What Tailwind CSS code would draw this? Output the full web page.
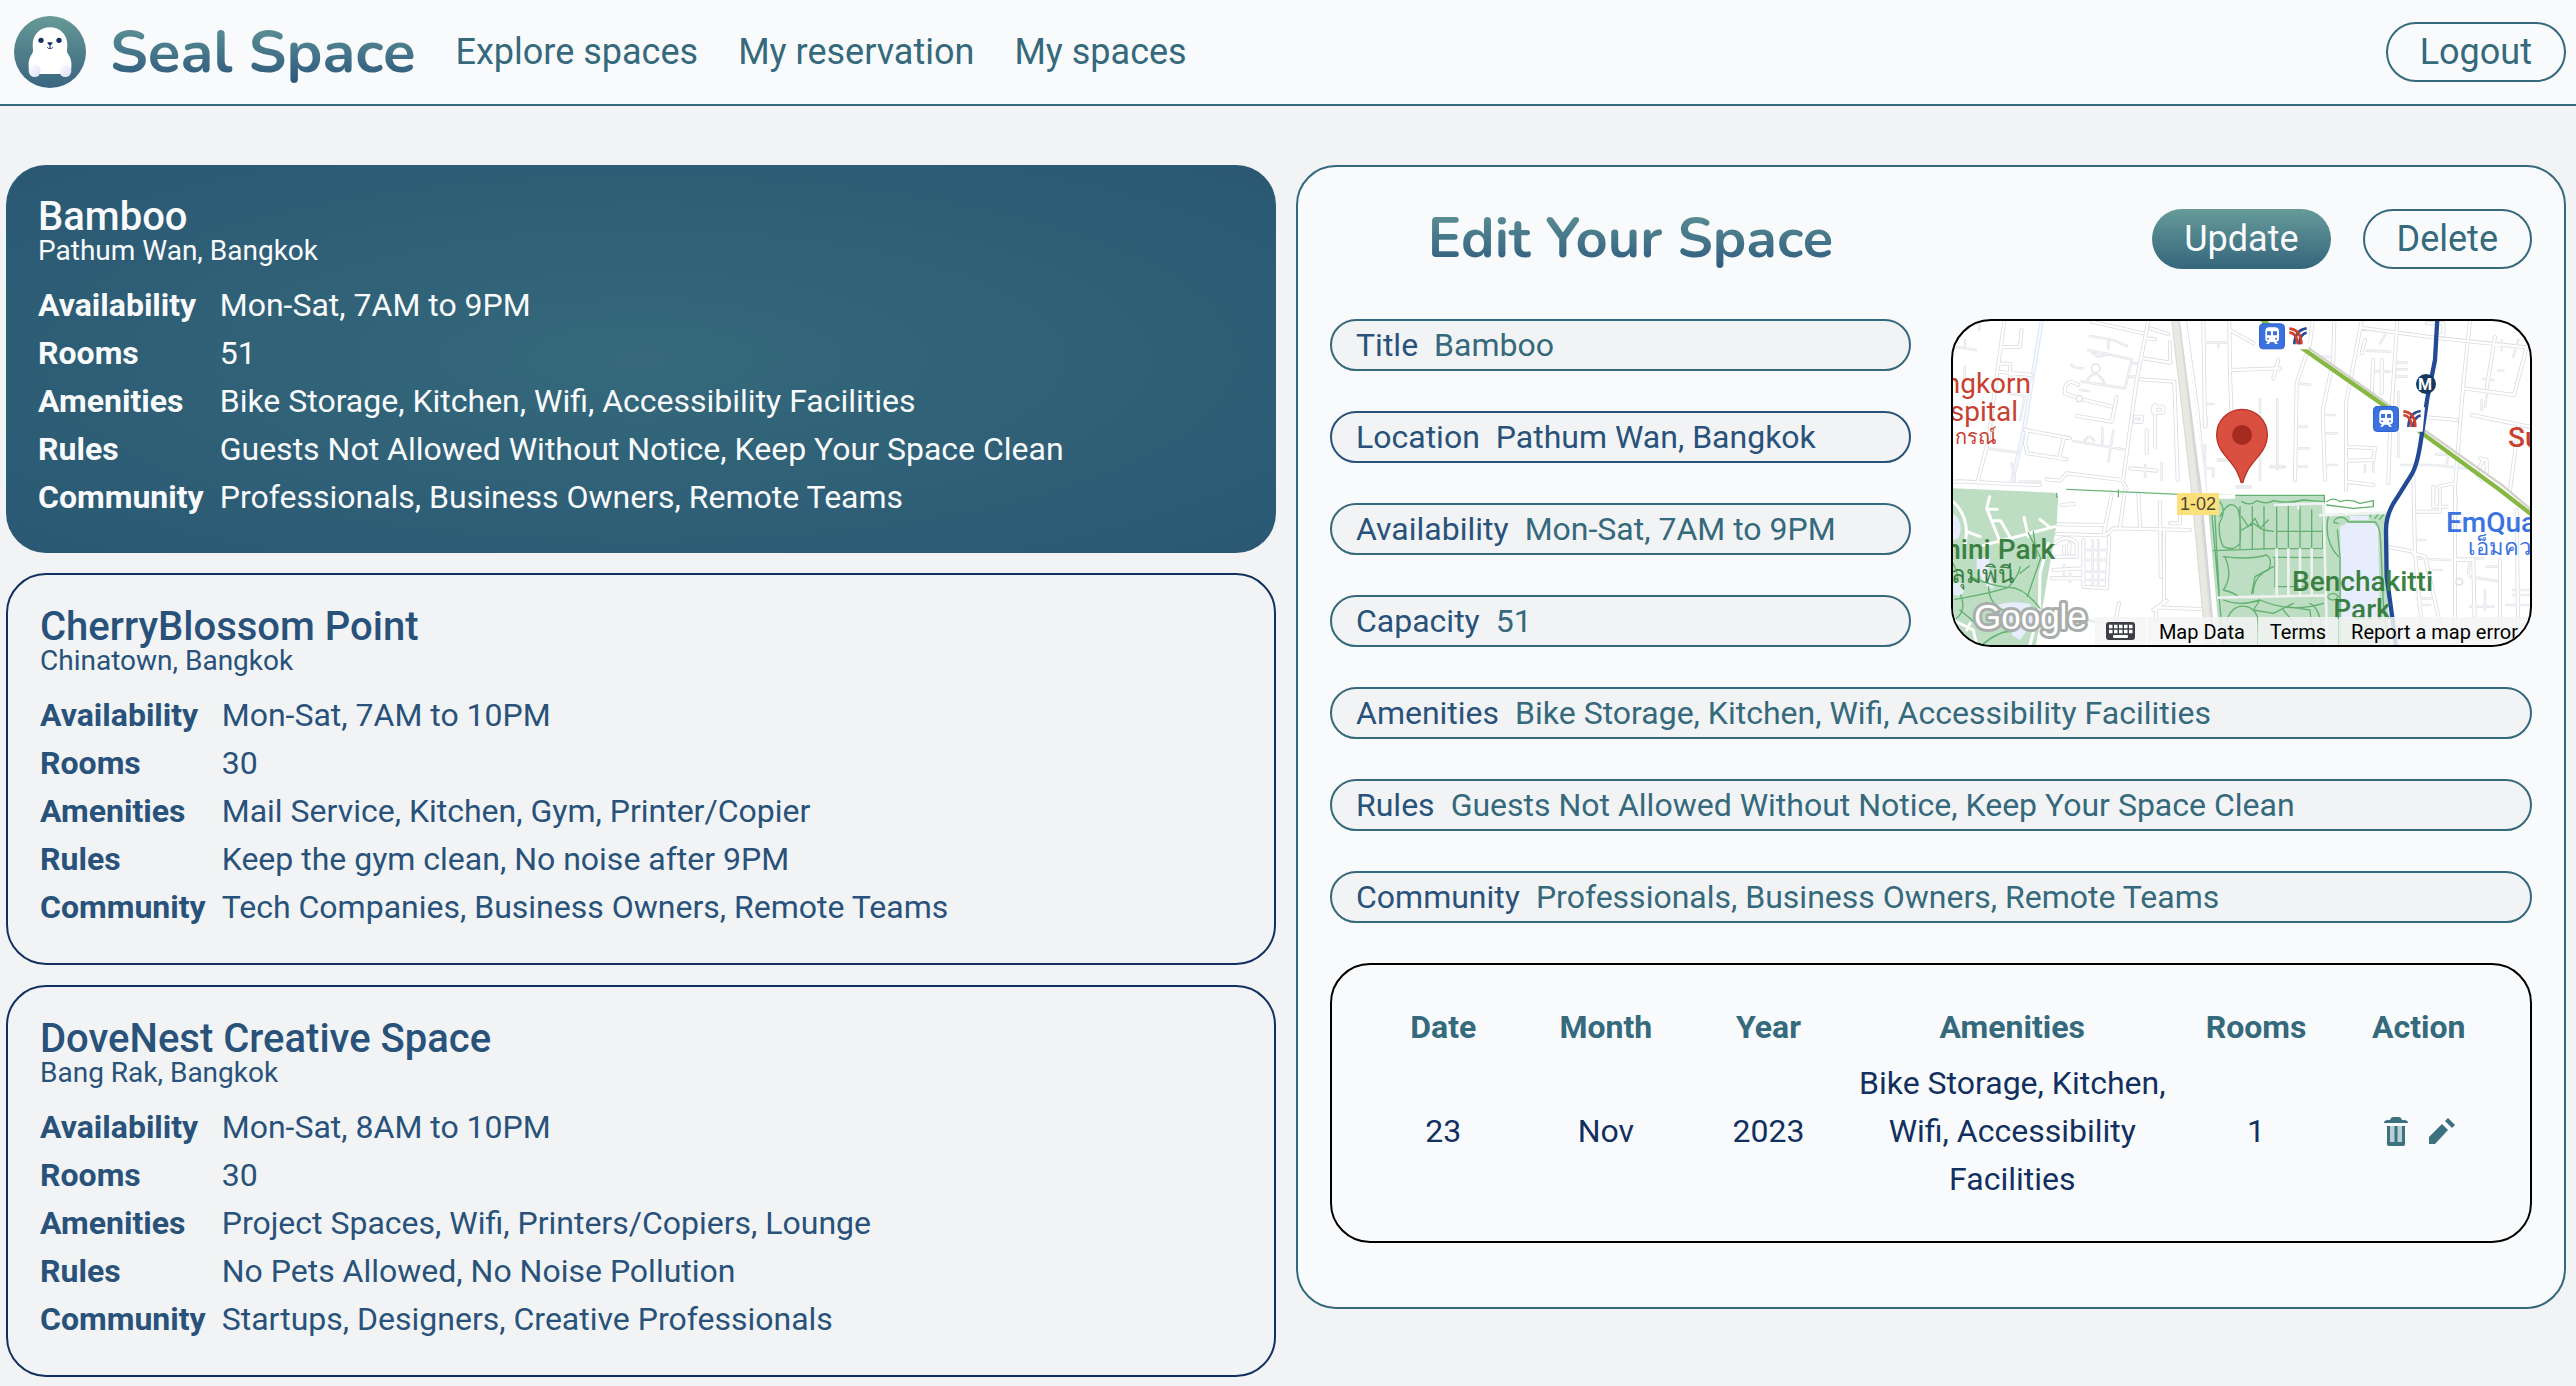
<!DOCTYPE html>
<html lang="en">
<head>
<meta charset="utf-8">
<title>Seal Space</title>
<script src="https://cdn.jsdelivr.net/npm/@tailwindcss/browser@4"></script>
</head>
<body class="min-h-screen bg-[#f2f3f5] font-[Roboto,sans-serif] text-[32px] leading-[48px] text-[#28527a]">

<header class="flex items-center justify-between border-b-2 border-[#35697c] bg-[#f9fafc] pr-[10px] pl-[14px] h-[106px]">
  <div class="flex items-center gap-6">
    <svg class="size-[72px]" viewBox="42 48 216 216" aria-hidden="true">
      <defs>
        <linearGradient id="logoBg" x1="0" y1="0" x2="0" y2="1"><stop offset="0" stop-color="#669996"/><stop offset="1" stop-color="#3a6580"/></linearGradient>
        <linearGradient id="flip" x1="0" y1="0" x2="1" y2="1"><stop offset="0" stop-color="#fff"/><stop offset="1" stop-color="#dcdff8"/></linearGradient>
      </defs>
      <circle cx="150" cy="156" r="108" fill="url(#logoBg)"/>
      <path d="M150 82C120 82 98 104 98 134C98 146 101 152 97 160C88 172 84 186 86 202C86 214 92 220 100 222H200C208 220 214 214 214 202C216 186 212 172 203 160C199 152 202 146 202 134C202 104 180 82 150 82Z" fill="#fff"/>
      <ellipse cx="104" cy="212" rx="18" ry="19" fill="url(#flip)"/>
      <ellipse cx="196" cy="212" rx="18" ry="19" fill="url(#flip)"/>
      <circle cx="123" cy="121" r="8" fill="#173066"/>
      <circle cx="177" cy="121" r="8" fill="#173066"/>
      <path d="M142 127H158Q158 133 150 137Q142 133 142 127Z" fill="#173066"/>
      <path d="M150 136V144M142 142Q144 147 150 145Q156 147 158 142" fill="none" stroke="#173066" stroke-width="3"/>
    </svg>
    <div class="flex items-center gap-10 text-4xl text-[#35697c]">
      <a href="#" class="bg-gradient-to-b from-[#669b97] to-[#28527a] bg-clip-text font-[Nunito,Lato,sans-serif] text-[60px] leading-[72px] font-bold text-transparent">Seal Space</a>
      <nav class="flex gap-10">
        <a href="#">Explore spaces</a>
        <a href="#">My reservation</a>
        <a href="#">My spaces</a>
      </nav>
    </div>
  </div>
  <button class="h-[60px] rounded-full border-2 border-[#35697c] px-8 text-4xl text-[#35697c]">Logout</button>
</header>

<main class="grid grid-cols-2 items-start gap-5 pt-[59px] pr-[10px] pb-2 pl-[6px]">
  <section class="flex flex-col gap-5">
    <article class="rounded-[40px] bg-radial from-[#35697b] to-[#2a5873] p-8 text-[#f9fafc]">
      <h2 class="text-[40px] leading-[40px] font-medium">Bamboo</h2>
      <p class="text-[28px] leading-[28px]">Pathum Wan, Bangkok</p>
      <dl class="mt-4 grid grid-cols-[auto_1fr] gap-x-4">
        <dt class="font-bold">Availability</dt><dd>Mon-Sat, 7AM to 9PM</dd>
        <dt class="font-bold">Rooms</dt><dd>51</dd>
        <dt class="font-bold">Amenities</dt><dd>Bike Storage, Kitchen, Wifi, Accessibility Facilities</dd>
        <dt class="font-bold">Rules</dt><dd>Guests Not Allowed Without Notice, Keep Your Space Clean</dd>
        <dt class="font-bold">Community</dt><dd>Professionals, Business Owners, Remote Teams</dd>
      </dl>
    </article>
    <article class="rounded-[40px] border-2 border-[#12305f] p-8">
      <h2 class="text-[40px] leading-[40px] font-medium">CherryBlossom Point</h2>
      <p class="text-[28px] leading-[28px]">Chinatown, Bangkok</p>
      <dl class="mt-4 grid grid-cols-[auto_1fr] gap-x-4">
        <dt class="font-bold">Availability</dt><dd>Mon-Sat, 7AM to 10PM</dd>
        <dt class="font-bold">Rooms</dt><dd>30</dd>
        <dt class="font-bold">Amenities</dt><dd>Mail Service, Kitchen, Gym, Printer/Copier</dd>
        <dt class="font-bold">Rules</dt><dd>Keep the gym clean, No noise after 9PM</dd>
        <dt class="font-bold">Community</dt><dd>Tech Companies, Business Owners, Remote Teams</dd>
      </dl>
    </article>
    <article class="rounded-[40px] border-2 border-[#12305f] p-8">
      <h2 class="text-[40px] leading-[40px] font-medium">DoveNest Creative Space</h2>
      <p class="text-[28px] leading-[28px]">Bang Rak, Bangkok</p>
      <dl class="mt-4 grid grid-cols-[auto_1fr] gap-x-4">
        <dt class="font-bold">Availability</dt><dd>Mon-Sat, 8AM to 10PM</dd>
        <dt class="font-bold">Rooms</dt><dd>30</dd>
        <dt class="font-bold">Amenities</dt><dd>Project Spaces, Wifi, Printers/Copiers, Lounge</dd>
        <dt class="font-bold">Rules</dt><dd>No Pets Allowed, No Noise Pollution</dd>
        <dt class="font-bold">Community</dt><dd>Startups, Designers, Creative Professionals</dd>
      </dl>
    </article>
  </section>

  <section class="flex flex-col gap-10 rounded-[40px] border-2 border-[#35697c] bg-[#f9fafc] px-8 pt-8 pb-16">
    <div class="grid grid-cols-2 items-center">
      <h1 class="text-center"><span class="inline-block bg-gradient-to-b from-[#669b97] to-[#28527a] bg-clip-text font-[Nunito,Lato,sans-serif] text-[56px] leading-[80px] font-bold text-transparent">Edit Your Space</span></h1>
      <div class="flex justify-end gap-8 text-4xl">
        <button class="h-[60px] rounded-full bg-gradient-to-b from-[#669b99] to-[#35667c] px-8 text-[#f9fafc]">Update</button>
        <button class="h-[60px] rounded-full border-2 border-[#35697c] px-8 text-[#35697c]">Delete</button>
      </div>
    </div>

    <div class="grid grid-cols-2 gap-10">
      <div class="flex flex-col gap-10">
        <label class="flex gap-4 rounded-full border-2 border-[#35697c] bg-[#f2f3f5] px-6">Title<input class="min-w-0 flex-1 text-[#35697c] outline-none" value="Bamboo"></label>
        <label class="flex gap-4 rounded-full border-2 border-[#28527a] bg-[#f2f3f5] px-6">Location<input class="min-w-0 flex-1 outline-none" value="Pathum Wan, Bangkok"></label>
        <label class="flex gap-4 rounded-full border-2 border-[#35697c] bg-[#f2f3f5] px-6">Availability<input class="min-w-0 flex-1 text-[#35697c] outline-none" value="Mon-Sat, 7AM to 9PM"></label>
        <label class="flex gap-4 rounded-full border-2 border-[#35697c] bg-[#f2f3f5] px-6">Capacity<input class="min-w-0 flex-1 text-[#35697c] outline-none" value="51"></label>
      </div>

      <div class="relative overflow-hidden rounded-[40px] border-2 border-black bg-white">
        <svg class="absolute inset-0 size-full" viewBox="39 33 1731 972" preserveAspectRatio="xMidYMid slice" fill="none" stroke-linecap="round" stroke-linejoin="round" aria-hidden="true">
          <defs>
            <path id="roads" d="M193 33L170 200L145 390L112 518M625 33L590 210L550 505M455 35L610 70M620 85L645 88M630 55L685 72M868 33L870 190L875 320M600 208L703 215L713 510M255 360L390 385M262 430L380 448M372 385L358 440M262 360L255 400L262 430M182 112L240 110L245 60M172 185L275 195M178 160L212 162M210 170V205M39 515L62 514L215 522L300 525M320 508L360 512L380 490L545 510L560 535M610 145L692 158M690 95V155M375 250Q370 220 395 215L415 225M375 250L415 265L515 290M530 262L515 335L410 318M570 475L650 482M645 285V410M620 360V430M585 320H605V335H585M790 33L795 350M640 290H670V308H640ZM735 33L772 300L795 540
            M1265 33L1218 280L1218 540M1183 33L1180 150L1148 300L1155 510M1118 33L1110 100L1070 220L1065 510M1372 33L1350 370L1345 520M1260 53L1500 85L1760 112M1590 33L1570 220L1545 530V1000M1665 80L1640 235M1570 235L1722 255L1760 112M1595 315L1768 350M1735 350L1710 540M1460 322L1550 330M1218 410L1305 415L1300 450L1222 452M1218 515L1300 525M870 60L940 100M875 180L1020 175M1000 205L1015 150M1275 90L1265 130M1460 40H1510V75H1490M1300 150L1295 250M1325 150V250M1630 450L1610 490L1625 510M1620 445L1640 450V490M1480 530V590H1520M1545 690
            M1420 500L1425 730L1450 1000M1420 730L1455 740L1500 940M1600 750L1605 1000M1680 750V960M1350 712L1420 725M1430 605H1500V535M1600 750H1550M1730 600L1735 1000M1495 530L1540 520
            M350 672L495 676L520 655L750 660M515 555L490 675M555 540L540 650M595 550L600 650M350 643L490 645M365 585L402 582M660 575L662 800M672 660V880M720 580V640H690M537 880L527 930M650 892L850 900M648 892V930M430 690V830L500 835L508 680M345 700Q380 670 410 700V740H350M372 710V730M388 700V730M340 780L425 775M335 805H425M680 872L640 900"/>
            <path id="lanes" d="M39 110L108 120M75 90V110M118 33V60M75 170L72 220M450 78L520 90L560 108M505 95V115M445 120L575 148L555 235L425 215M455 125Q475 150 500 130M467 175M440 215Q465 165 495 222M395 165Q400 175 430 175M420 240L445 243M575 160H592M570 200H590M400 393L550 418M487 355V400M520 362L505 455M435 392Q448 370 462 392M665 460V510M615 465V500M790 97H865M835 97V112M795 282H822M800 322V350M795 405V510M795 475H820V500M140 415L235 428M215 460L225 510M205 250L255 258L240 330M240 515H300
            M960 268V510M1012 268V480M992 470H1035M1070 350H1100M1070 415H1105M1070 470H1100M1075 220L1110 224M1155 315H1185M1155 370H1190M1155 465H1190M1145 140L1180 142M1150 160L1178 163M1280 122L1350 125M1320 100L1335 75M1300 185H1350M1370 157H1400M1370 178H1400M1370 200H1400M1630 207L1660 210M1675 182H1690M1720 140L1735 90M1640 255L1635 290M1375 245V440M1487 433L1525 435L1520 460M1480 465L1580 475M1275 465V485M1300 460V485M1385 465H1485M1625 270V300M1685 90V120
            M1500 530V580M1430 690H1455M1425 745L1530 750M1550 745H1630M1480 780H1505M1590 745L1585 790M1480 865H1430M1435 885H1470M1590 890H1660M1590 800L1680 815M1720 840H1768M1720 855H1768M1700 885H1768M1635 840V900M1680 770H1640M1550 600V560M1600 620L1550 640M458 690V830M475 690V835M432 720H505M432 750H505M432 785H505M432 810H505M440 930L500 940M372 765V795M390 790V815"/>
          </defs>
          <path d="M305 33L250 370L215 520" stroke="#dfe7f5" stroke-width="13"/>
          <path d="M305 33L250 370L215 520" stroke="#f4f8ff" stroke-width="7"/>
          <use href="#roads" stroke="#dbdde2" stroke-width="12"/>
          <use href="#lanes" stroke="#e4e6ea" stroke-width="8"/>
          <use href="#roads" stroke="#fff" stroke-width="7"/>
          <use href="#lanes" stroke="#f4f5f7" stroke-width="3"/>
          <circle cx="467" cy="175" r="13" stroke="#e0e2e6" stroke-width="4" fill="#fff"/>
          <circle cx="1558" cy="815" r="10" stroke="#e0e2e6" stroke-width="5"/>
          <circle cx="418" cy="266" r="9" stroke="#e0e2e6" stroke-width="4" fill="#fff"/>
          <path d="M835 450H865M888 531H930M992 470H1030" stroke="#ececee" stroke-width="12"/>

          <path d="M39 535L345 548L355 560L350 640L330 760L288 1005H39Z" fill="#bddec3"/>
          <path d="M39 612Q62 620 62 660Q60 690 39 690ZM110 745L150 742L145 790L162 835L145 835L110 780ZM170 885Q215 870 270 882L285 930L262 960L240 990L215 975L220 940L180 920Z" fill="#e8edfd"/>
          <circle cx="53" cy="837" r="20" fill="#e3eefa"/>
          <path d="M149 560L140 595L182 700M142 598H172M160 632H182L215 690M130 706L345 650M252 622L265 680M300 628L330 652M39 575Q90 620 76 700M325 700L300 790L298 900L270 1005M39 930L100 960L110 1005M80 665L120 680M80 960L90 940" stroke="#fff" stroke-width="9"/>
          <path d="M45 868Q150 850 205 832Q250 830 300 895M39 760Q60 800 50 815M62 855Q80 900 50 925M265 668L302 745L262 860M240 790L268 768M280 665L290 740M205 832Q240 790 240 770M146 830Q146 880 190 900M125 1005Q180 960 215 965M60 900L120 950M90 800Q160 830 205 832M350 550V562" stroke="#62b070" stroke-width="4"/>
          <path d="M380 538L535 545L720 553M535 540V560" stroke="#6fb67b" stroke-width="4"/>

          <path d="M800 556H1153L1156 612L1340 606L1335 700L1350 1005H840Z" fill="#bddec3"/>
          <path d="M1200 650L1222 638H1300L1314 655L1320 925H1205Z" fill="#e8edfd"/>
          <path d="M1230 618H1286V630H1230Z" fill="#e8edfd"/>
          <path d="M800 556H1153V580M812 570L850 1005M822 570L838 860M840 575Q860 600 838 640Q835 680 850 710Q880 725 900 700Q905 640 895 600Q870 560 840 620M900 590V715M937 590V718M972 590V715M1010 590V715M1045 585V715M1080 585V715M1115 600V715M1148 590V715M905 620L925 650L945 625L960 655L985 630M905 660L940 640L970 660L1000 664M1010 664H1148M820 722L1000 716L1148 715M1000 742L1150 743M850 740Q930 750 980 735Q1000 750 985 780Q940 800 940 850M855 740Q880 800 850 840Q890 850 900 865M1005 745V830M1000 770L945 800L935 850M1010 830H1100M850 870Q900 890 960 870Q1050 910 1150 880M860 930Q880 880 920 890Q960 900 955 960M960 870L940 900L1000 910L1060 880M1030 900L1080 960M1040 890L1110 900L1120 1005M1110 880Q1150 900 1145 1005M905 575Q930 590 950 572Q980 585 1000 572Q1040 582 1090 570L1150 575M1160 575Q1180 560 1200 575Q1230 565 1260 580L1300 572V590L1240 595L1160 585M1165 620Q1150 690 1195 740M1195 640Q1170 640 1190 625Q1210 615 1225 636H1305Q1320 645 1322 700L1330 880L1345 1005M1192 660L1200 740V1005M1290 620L1295 608M1305 625L1315 612M1318 628L1330 615M1160 860Q1180 840 1195 860Q1180 880 1160 860" stroke="#63b071" stroke-width="4"/>
          <path d="M835 863L1158 856M1010 718V856M1045 718V856M1080 718V856M1115 718V856M1005 585L1150 580M1150 580L1162 1005M1140 616L1340 608M1075 585V595" stroke="#eef2f0" stroke-width="8"/>

          <path d="M722 33L788 540L830 1005" stroke="#d3d5da" stroke-width="22"/>
          <path d="M727 33L792 540L833 1005" stroke="#fff" stroke-width="14"/>
          <path d="M706 33L765 540L808 1005" stroke="#dddbd6" stroke-width="25" stroke-linecap="butt"/>
          <path d="M706 33L765 540L808 1005" stroke="#e9e8e3" stroke-width="18" stroke-linecap="butt"/>
          <path d="M880 500V560H840" stroke="#fff" stroke-width="12"/>

          <path d="M1100 110L1690 528L1770 596" stroke="#d4d1cb" stroke-width="7"/>
          <path d="M970 33L1330 285L1680 540L1775 614" stroke="#87b844" stroke-width="13"/>
          <path d="M1492 25L1485 150L1462 265L1443 390Q1432 465 1415 493L1370 565Q1338 610 1338 660L1340 800L1362 960L1368 1010" stroke="#234a94" stroke-width="13"/>
          <path d="M1035 45H1105V118H1035ZM1377 292H1455L1448 365H1377Z" fill="#fff"/>
          <circle cx="1458" cy="222" r="30" fill="#17375f"/>
          <g id="station">
            <rect x="958.500" y="41.500" width="75" height="75" rx="11" fill="#3b72e0" stroke="#2f62cf" stroke-width="3"/>
            <path d="M985 52H1007Q1017 54 1017 64V86Q1017 94 1008 95L1014 102H1006L1001 96H991L986 102H978L984 95Q976 94 976 86V64Q976 54 985 52Z" fill="#fff"/>
            <path d="M981 64H993V76H981ZM999 64H1011V76H999Z" fill="#3b72e0"/>
            <circle cx="984" cy="86" r="3" fill="#3b72e0"/><circle cx="1008" cy="86" r="3" fill="#3b72e0"/>
            <g stroke-linecap="butt"><path d="M1100 55Q1064 60 1063 103M1100 68Q1080 72 1077 103" stroke="#2b4a94" stroke-width="8"/><path d="M1048 56Q1084 60 1084 103M1048 67Q1072 70 1073 103" stroke="#d0402b" stroke-width="8"/></g>
          </g>
          <use href="#station" x="342" y="248"/>
          <path d="M906 298A76 76 0 0 1 982 374C982 425 940 446 920 487Q912 503 909 516Q906 520 903 516Q900 503 892 487C872 446 830 425 830 374A76 76 0 0 1 906 298Z" fill="#d94f40" stroke="#b5342a" stroke-width="4"/>
          <circle cx="906" cy="375" r="30" fill="#a52a20"/>
        </svg>

        <div class="text-[28px] leading-[28px] whitespace-nowrap">
          <p class="absolute top-[49px] right-[499px] text-right text-[#c8402f]">Chulalongkorn</p>
          <p class="absolute top-[77px] right-[512px] text-right text-[#c8402f]">Hospital</p>
          <p class="absolute top-[102px] left-[2px] text-[20px] text-[#c8402f]">กรณ์</p>
          <p class="absolute top-[215px] right-[475px] font-medium text-[#3b8043]">Lumphini Park</p>
          <p class="absolute top-[240px] right-[516px] text-[24px] text-[#3b8043]">สวนลุมพินี</p>
          <p class="absolute top-[247px] left-[339px] w-[140px] text-center font-medium text-[#3b8043]">Benchakitti<br>Park</p>
          <p class="absolute top-[188px] left-[493px] font-medium text-[#3b73e0]">EmQuartier</p>
          <p class="absolute top-[213px] left-[515px] text-[22px] text-[#3b73e0]">เอ็มควอเทียร์</p>
          <p class="absolute top-[103px] left-[555px] font-medium text-[#c8402f]">Su</p>
          <p class="absolute top-[172px] left-[224px] bg-[#fbe07c] px-[3px] font-['Liberation_Sans',sans-serif] text-[18px] leading-[22px] text-[#4d4630]">1-02</p>
          <p class="absolute top-[54px] left-[462px] w-5 text-center text-[16px] leading-[20px] font-bold text-white">M</p>
          <svg class="absolute top-[274px] left-4 h-[52px] w-[130px]" viewBox="0 0 130 52" role="img" aria-label="Google"><text x="5" y="34" font-family="Liberation Sans, sans-serif" font-size="35" fill="#fff" stroke="#a9aeab" stroke-width="6" stroke-linejoin="round" paint-order="stroke">Google</text></svg>
        </div>

        <div class="absolute right-0 bottom-0 flex h-7 gap-px text-[20px] leading-[30px] whitespace-nowrap text-black">
          <button class="flex w-[51px] items-center justify-center bg-[#f5f5f5]/85" aria-label="Keyboard shortcuts">
            <svg class="h-[18px] w-[29px]" viewBox="0 0 29 18"><rect width="29" height="18" rx="3" fill="#3c4046"/><path d="M3 4.500H27M3 9.500H27" stroke="#fff" stroke-width="3.500" stroke-dasharray="3.500 1.500"/><rect x="7" y="13" width="15" height="3" rx="1" fill="#fff"/></svg>
          </button>
          <button class="bg-[#f5f5f5]/85 px-3">Map Data</button>
          <a href="#" class="bg-[#f5f5f5]/85 px-3">Terms</a>
          <a href="#" class="bg-[#f5f5f5]/85 px-3">Report a map error</a>
        </div>
      </div>
    </div>

    <label class="flex gap-4 rounded-full border-2 border-[#35697c] bg-[#f2f3f5] px-6">Amenities<input class="min-w-0 flex-1 text-[#35697c] outline-none" value="Bike Storage, Kitchen, Wifi, Accessibility Facilities"></label>
    <label class="flex gap-4 rounded-full border-2 border-[#35697c] bg-[#f2f3f5] px-6">Rules<input class="min-w-0 flex-1 text-[#35697c] outline-none" value="Guests Not Allowed Without Notice, Keep Your Space Clean"></label>
    <label class="flex gap-4 rounded-full border-2 border-[#35697c] bg-[#f2f3f5] px-6">Community<input class="min-w-0 flex-1 text-[#35697c] outline-none" value="Professionals, Business Owners, Remote Teams"></label>

    <div class="rounded-[40px] border-2 border-black px-[30px] py-[38px]">
      <table class="w-full table-fixed text-center text-[#12305f]">
        <thead class="text-[#35697c]">
          <tr>
            <th class="w-1/7 pb-2">Date</th>
            <th class="w-1/7 pb-2">Month</th>
            <th class="w-1/7 pb-2">Year</th>
            <th class="w-2/7 pb-2">Amenities</th>
            <th class="w-1/7 pb-2">Rooms</th>
            <th class="w-1/7 pb-2">Action</th>
          </tr>
        </thead>
        <tbody>
          <tr>
            <td>23</td>
            <td>Nov</td>
            <td>2023</td>
            <td class="px-1">Bike Storage, Kitchen, Wifi, Accessibility Facilities</td>
            <td>1</td>
            <td>
              <div class="flex justify-center gap-[14px]">
                <button aria-label="Delete reservation"><svg class="size-8" viewBox="0 0 32 32" fill="#3c7280"><path d="M4 8Q4 5 8 5H10Q11 2 13 2H19Q21 2 22 5H24Q28 5 28 8Z"/><path d="M7 11H25V29Q25 31 23 31H9Q7 31 7 29Z" fill="#b9cfd6"/><path d="M7 11H10V27H14.500V11H17.500V27H22V11H25V29Q25 31 23 31H9Q7 31 7 29Z"/></svg></button>
                <button aria-label="Edit reservation"><svg class="size-8" viewBox="0 0 32 32" fill="#3c7280"><path d="M3 22L16 9L22 15L9 29H3Z"/><path d="M19 6L22 3L29 10L26 13Z"/></svg></button>
              </div>
            </td>
          </tr>
        </tbody>
      </table>
    </div>
  </section>
</main>
</body>
</html>
